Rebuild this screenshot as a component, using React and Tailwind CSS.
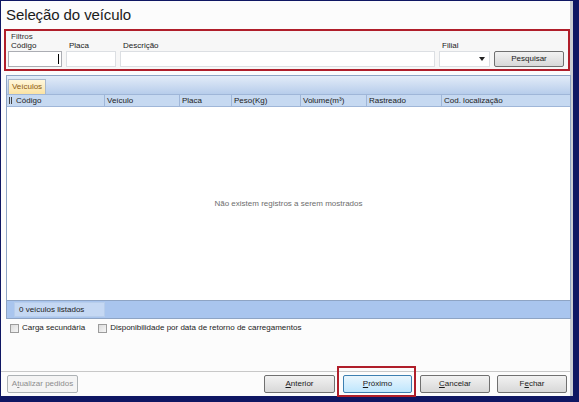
import React from "react";

const ui = { fontFamily: '"Liberation Sans", Arial, sans-serif' };

function Btn({ children, primary, disabled, className = "" }) {
  return (
    <div
      className={`flex h-[18px] items-center justify-center rounded-[2px] border text-[8px] ${
        primary
          ? "border-[#3c7fb1] bg-gradient-to-b from-[#eaf6fd] to-[#bee6fd] text-[#1a1a1a]"
          : disabled
          ? "border-[#adb2b5] bg-[#f4f4f4] text-[#8d8d8d]"
          : "border-[#707070] bg-gradient-to-b from-[#f2f2f2] to-[#d8d8d8] text-[#1a1a1a]"
      } ${className}`}
    >
      {children}
    </div>
  );
}

function Field({ label, w, children }) {
  return (
    <div className="flex flex-col" style={{ width: w }}>
      <div className="h-[10px] pl-[3px] text-[8px] leading-[10px] text-[#222]">{label}</div>
      {children}
    </div>
  );
}

export default function App() {
  const cols = [
    { t: "Código", w: 91 },
    { t: "Veículo", w: 75 },
    { t: "Placa", w: 52 },
    { t: "Peso(Kg)", w: 69 },
    { t: "Volume(m³)", w: 66 },
    { t: "Rastreado", w: 75 },
  ];

  return (
    <div className="relative h-[402px] w-[579px] bg-[#0f1763] pb-[6px] pl-[1px] pr-[6px] pt-[1px]" style={ui}>
      <div className="flex h-full flex-col border-r-[3px] border-[#c9ccd2] bg-[#fcfcfc]">
        {/* title */}
        <div className="h-[28px] pl-[5px] pt-[4px] text-[15px] leading-[20px] tracking-[-0.1px] text-[#1b1b1b]">
          Seleção do veículo
        </div>

        {/* filters (highlighted) */}
        <div className="ml-[3px] h-[42px] w-[566px] border-2 border-[#b01e2a] bg-[#f7f7f7] px-[2px] pt-[2px]">
          <div className="h-[8px] pl-[3px] text-[8px] leading-[8px] text-[#333]">Filtros</div>
          <div className="flex items-end gap-[4px]">
            <Field label="Código" w={54}>
              <div className="relative h-[16px] border border-[#abadb3] bg-white">
                <div className="absolute right-[2px] top-[2px] h-[10px] w-[1px] bg-black" />
              </div>
            </Field>
            <Field label="Placa" w={50}>
              <div className="h-[16px] border border-[#dcdfe3] bg-white" />
            </Field>
            <Field label="Descrição" w={315}>
              <div className="h-[16px] border border-[#dcdfe3] bg-white" />
            </Field>
            <Field label="Filial" w={51}>
              <div className="flex h-[16px] items-center justify-end border border-[#dcdfe3] bg-white pr-[4px]">
                <svg width="6" height="4" viewBox="0 0 6 4">
                  <path d="M0 0h6L3 4z" fill="#222" />
                </svg>
              </div>
            </Field>
            <Btn className="w-[70px] !h-[16px]">Pesquisar</Btn>
          </div>
        </div>

        {/* grid panel */}
        <div className="ml-[5px] mt-[4px] flex h-[244px] w-[565px] flex-col border border-[#8ea4c4] bg-white">
          <div className="flex h-[18px] items-end bg-gradient-to-b from-[#e3ecf8] to-[#b7cdeb] pl-[1px]">
            <div className="flex h-[15px] w-[38px] items-center justify-center border border-b-0 border-[#a9b8cc] bg-gradient-to-b from-[#fff7dc] to-[#fbe3a3] text-[8px] text-[#8a5a12]">
              Veículos
            </div>
          </div>
          <div className="flex h-[13px] items-center border-b border-t border-[#9fb6d8] bg-[#c6d9f1] text-[8px] text-[#222]">
            <div className="flex w-[7px] justify-center">
              <div className="flex gap-[1px]">
                <div className="h-[7px] w-[1px] bg-[#444]" />
                <div className="h-[7px] w-[1px] bg-[#444]" />
              </div>
            </div>
            {cols.map((c) => (
              <div
                key={c.t}
                className="h-full border-r border-[#9fb6d8] pl-[2px] leading-[12px]"
                style={{ width: c.w }}
              >
                {c.t}
              </div>
            ))}
            <div className="h-full flex-1 pl-[2px] leading-[12px]">Cod. localização</div>
          </div>
          <div className="flex flex-1 items-center justify-center text-[8px] text-[#6d6d6d]">
            Não existem registros a serem mostrados
          </div>
          <div className="flex h-[18px] items-center border-t border-[#8ea4c4] bg-[#a9c5ee] pl-[7px]">
            <div className="flex h-[15px] w-[91px] items-center border border-[#b7cdeb] bg-[#c5d8f3] pl-[4px] text-[8px] text-[#222]">
              0 veículos listados
            </div>
          </div>
        </div>

        {/* options */}
        <div className="mt-[3px] flex h-[12px] items-center gap-[8px] pl-[9px] text-[8px] text-[#222]">
          <label className="flex items-center gap-[3px]">
            <span className="h-[9px] w-[9px] border border-[#9c9c9c] bg-gradient-to-br from-[#dcdcdc] to-[#f6f6f6]" />
            Carga secundária
          </label>
          <label className="ml-[5px] flex items-center gap-[3px]">
            <span className="h-[9px] w-[9px] border border-[#9c9c9c] bg-gradient-to-br from-[#dcdcdc] to-[#f6f6f6]" />
            Disponibilidade por data de retorno de carregamentos
          </label>
        </div>

        <div className="flex-1" />
        <div className="h-[1px] bg-[#c8c8c8]" />

        {/* buttons */}
        <div className="flex h-[24px] items-start pl-[6px] pt-[3px]">
          <Btn disabled className="w-[71px]">
            A<span className="underline">t</span>ualizar pedidos
          </Btn>
          <div className="flex-1" />
          <Btn className="w-[71px]">
            <span className="underline">A</span>nterior
          </Btn>
          <Btn primary className="ml-[8px] w-[69px]">
            <span className="underline">P</span>róximo
          </Btn>
          <Btn className="ml-[8px] w-[70px]">
            <span className="underline">C</span>ancelar
          </Btn>
          <Btn className="ml-[7px] mr-[3px] w-[70px]">
            F<span className="underline">e</span>char
          </Btn>
        </div>
      </div>

      {/* red highlight around Próximo */}
      <div className="pointer-events-none absolute left-[337px] top-[366px] h-[31px] w-[79px] border-2 border-[#b01e2a]" />
    </div>
  );
}
